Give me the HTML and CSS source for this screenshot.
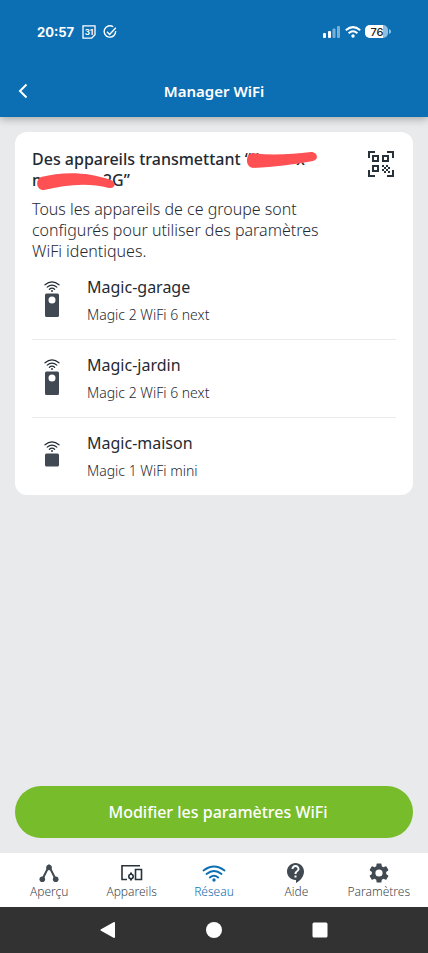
FILE: index.html
```html
<!DOCTYPE html>
<html lang="fr">
<head>
<meta charset="utf-8">
<meta name="viewport" content="width=device-width, initial-scale=1">
<title>Manager WiFi</title>
<link rel="stylesheet" href="styles.css">
</head>
<body>
<svg class="defs" aria-hidden="true">
  <symbol id="waves" viewBox="0 0 16 11">
    <g fill="none" stroke="currentColor" stroke-width="1.2" stroke-linecap="round">
      <path d="M1 3.800Q8-2.200 15 3.800M3.200 6.100Q8 2 12.800 6.100M5.400 8.300Q8 6.100 10.600 8.300"/>
    </g>
    <circle cx="8" cy="10" r=".9" fill="currentColor"/>
  </symbol>
  <symbol id="plug" viewBox="0 0 16 37">
    <use href="#waves" width="16" height="11"/>
    <path fill="#414a52" fill-rule="evenodd" d="M2.500 12.500h11a1.500 1.500 0 0 1 1.500 1.500v20.500a1.500 1.500 0 0 1-1.500 1.500h-11a1.500 1.500 0 0 1-1.500-1.500V14a1.500 1.500 0 0 1 1.500-1.500zM8 15.500a3.500 3.500 0 1 0 0 7 3.500 3.500 0 0 0 0-7z"/>
  </symbol>
  <symbol id="mini" viewBox="0 0 16 26">
    <use href="#waves" width="16" height="11"/>
    <rect x="1" y="12.500" width="14" height="13" rx="1.500" fill="#414a52"/>
  </symbol>
</svg>
<div class="screen">
  <header class="header">
    <div class="status">
      <time class="clock">20:57</time>
      <svg class="calendar" viewBox="0 0 14 14"><path fill="none" stroke="#fff" stroke-width="1.300" d="M1 .8h12v9l-3.400 3.400H1z"/><text x="7" y="10" text-anchor="middle" class="day">31</text></svg>
      <svg class="check" viewBox="0 0 14 14" fill="none" stroke="#fff" stroke-width="1.400"><path d="M10.200 1.800A5.700 5.700 0 1 0 12.600 6M4 6.800l2.600 2.600 6.200-6.600"/></svg>
      <span class="spacer"></span>
      <svg class="signal" viewBox="0 0 18 12" fill="#fff"><rect x="0" y="7" width="3" height="5" rx="1"/><rect x="5" y="5" width="3" height="7" rx="1"/><g opacity=".45"><rect x="9.500" y="2.500" width="3" height="9.500" rx="1"/><rect x="14" y="0" width="3" height="12" rx="1"/></g></svg>
      <svg class="wifi" viewBox="0 0 16 12"><g fill="none" stroke="#fff" stroke-width="2"><path d="M.8 4.200Q8-2 15.200 4.200M3.600 7.200Q8 3.400 12.400 7.200"/></g><circle cx="8" cy="10" r="1.700" fill="#fff"/></svg>
      <svg class="battery" viewBox="0 0 26 14"><rect width="23" height="13" rx="5" fill="#8fbfe0"/><path fill="#fff" d="M5 0h13v13H5a5 5 0 0 1-5-5V5a5 5 0 0 1 5-5z"/><path fill="#8fbfe0" d="M24 4c3 1 3 4 0 5z"/><text x="12" y="11" text-anchor="middle" class="level">76</text></svg>
    </div>
    <div class="titlebar">
      <button class="back" aria-label="Retour"><svg viewBox="0 0 10 16"><path d="M8.500 1.500 2 8l6.500 6.500" fill="none" stroke="#fff" stroke-width="2"/></svg></button>
      <h1>Manager WiFi</h1>
    </div>
  </header>
  <main class="main">
    <section class="card">
      <div class="intro">
        <div class="copy">
          <h2>Des appareils transmettant “<span class="hidden-name first">li<span>x</span><svg viewBox="0 0 70 16" preserveAspectRatio="none"><path fill="#ff5153" d="M5 1C25 4 45 2 64 0c7 0 8 8 2 9C46 13 26 15 6 16-2 15-2 3 5 1z"/></svg></span> <br>n<span class="hidden-name second">2<svg viewBox="0 0 78 17" preserveAspectRatio="none"><path fill="#ff5153" d="M4 4C25-1 47-2 74 7c6 3 4 9-2 8C50 9 28 12 7 17-1 17-2 7 4 4z"/></svg></span>G”</h2>
          <p>Tous les appareils de ce groupe sont configurés pour utiliser des paramètres WiFi identiques.</p>
        </div>
        <button class="qr" aria-label="Code QR"><svg viewBox="0 0 26 26"><g fill="none" stroke="#27323a" stroke-width="2"><path d="M1 7V1h6M19 1h6v6M25 19v6h-6M7 25H1v-6"/><path d="M5 5h5v5H5zM15 5h5v5h-5zM5 15h5v5H5z"/></g><path fill="#27323a" d="M14 14h2v2h-2zM18 14h2v2h-2zM16 16h2v2h-2zM20 16h2v2h-2zM14 18h2v2h-2zM18 18h2v2h-2zM16 20h2v2h-2zM20 20h2v2h-2z"/></svg></button>
      </div>
      <ul class="devices">
        <li><svg class="plug"><use href="#plug"/></svg><div><h3>Magic-garage</h3><p>Magic 2 WiFi 6 next</p></div></li>
        <li><svg class="plug"><use href="#plug"/></svg><div><h3>Magic-jardin</h3><p>Magic 2 WiFi 6 next</p></div></li>
        <li><svg class="mini"><use href="#mini"/></svg><div><h3>Magic-maison</h3><p>Magic 1 WiFi mini</p></div></li>
      </ul>
    </section>
    <button class="primary">Modifier les paramètres WiFi</button>
  </main>
  <nav class="tabs">
    <a href="#apercu"><svg viewBox="0 0 24 24"><path d="M5 19 12 5l7 14" fill="none" stroke="currentColor" stroke-width="2"/><g fill="currentColor"><circle cx="12" cy="6.500" r="2.800"/><circle cx="5.300" cy="18.300" r="2.800"/><circle cx="18.700" cy="18.300" r="2.800"/></g></svg>Aperçu</a>
    <a href="#appareils"><svg viewBox="0 0 24 24" fill="none" stroke="#27323a" stroke-width="1.600"><path d="M20 4.800H2v13.700h5M15.500 8.500h6v10h-6z"/><circle cx="11" cy="15.500" r="2.200"/><path d="M10 12.200h2M10 18.800h2"/></svg>Appareils</a>
    <a href="#reseau" class="active" aria-current="page"><svg viewBox="0 0 24 24"><g fill="none" stroke="currentColor" stroke-width="1.900" stroke-linecap="round"><path d="M1.500 9.500Q12 1.500 22.500 9.500M4.500 13Q12 6.800 19.500 13M7.800 16.500Q12 13 16.200 16.500"/></g><circle cx="12" cy="19" r="1.700" fill="currentColor"/></svg>Réseau</a>
    <a href="#aide"><svg viewBox="0 0 24 24"><path fill="currentColor" d="M11.500 2C6.810 2 3 5.810 3 10.500S6.810 19 11.500 19h.5v3c4.860-2.340 8-7 8-11.500C20 5.810 16.190 2 11.500 2zm1 14.500h-2v-2h2v2zm0-3.500h-2c0-3.250 3-3 3-5 0-1.100-.9-2-2-2s-2 .9-2 2h-2c0-2.210 1.790-4 4-4s4 1.790 4 4c0 2.500-3 2.750-3 5z"/></svg>Aide</a>
    <a href="#parametres"><svg viewBox="0 0 24 24"><path fill="currentColor" d="M19.140 12.940a7 7 0 0 0 0-1.880l2.030-1.580a.5.500 0 0 0 .12-.61l-1.920-3.320a.5.500 0 0 0-.59-.22l-2.390.96a7 7 0 0 0-1.620-.94l-.36-2.540a.5.500 0 0 0-.48-.41h-3.840a.5.500 0 0 0-.47.410l-.36 2.540a7 7 0 0 0-1.620.94l-2.390-.96a.5.500 0 0 0-.59.220L2.740 8.870a.5.500 0 0 0 .12.610l2.030 1.580a7 7 0 0 0 0 1.880l-2.030 1.580a.5.500 0 0 0-.12.610l1.920 3.320c.12.220.37.290.59.220l2.390-.96c.5.380 1.030.7 1.620.94l.36 2.540c.05.240.24.410.48.410h3.840c.24 0 .44-.17.470-.41l.36-2.540a7 7 0 0 0 1.620-.94l2.390.96c.22.080.47 0 .59-.22l1.920-3.320a.5.500 0 0 0-.12-.61zM12 15.600a3.600 3.600 0 1 1 0-7.200 3.600 3.600 0 0 1 0 7.200z"/></svg>Paramètres</a>
  </nav>
  <div class="system">
    <button aria-label="Précédent"><svg viewBox="0 0 16 16"><path fill="#fff" stroke="#fff" stroke-width="2" stroke-linejoin="round" d="M14 1v14L1.500 8z"/></svg></button>
    <button aria-label="Accueil"><svg viewBox="0 0 16 16"><circle cx="8" cy="8" r="8" fill="#fff"/></svg></button>
    <button aria-label="Récents"><svg viewBox="0 0 16 16"><rect x=".5" y=".5" width="15" height="15" rx="1.500" fill="#fff"/></svg></button>
  </div>
</div>
</body>
</html>
```
FILE: styles.css
```css
* { box-sizing: border-box; }
body { margin: 0; font-family: "Noto Sans", "Open Sans", sans-serif; color: #1f2a33; background: #e9eaec; }
h1, h2, h3, p, ul { margin: 0; padding: 0; font-weight: 500; }
button { border: 0; padding: 0; background: none; font: inherit; color: inherit; cursor: pointer; }
svg { display: block; flex: none; }
.defs { position: absolute; width: 0; height: 0; }
.screen { min-height: 100vh; display: flex; flex-direction: column; }
.header { background: #0c6eb3; color: #fff; box-shadow: 0 2px 8px rgba(0, 0, 0, .3); }
.status { height: 64px; padding: 0 37px; display: flex; align-items: center; gap: 8px; }
.clock { font: 700 13px Inter, sans-serif; }
.calendar, .check { width: 14px; height: 14px; }
.check { margin-left: -1px; }
.day { font: 700 8px Inter, sans-serif; fill: #fff; }
.spacer { flex: 1; }
.signal { width: 18px; height: 12px; margin-right: -4px; }
.wifi { width: 16px; height: 12px; margin-right: -4px; }
.battery { width: 26px; height: 14px; }
.level { font: 500 11px Inter, sans-serif; fill: #222; }
.titlebar { height: 53px; display: grid; grid-template-columns: 46px 1fr 46px; align-items: center; }
.back { height: 48px; display: flex; justify-content: center; align-items: center; }
.back svg { width: 10px; height: 16px; }
h1 { font-size: 15px; font-weight: 600; text-align: center; }
.main { flex: 1; display: flex; flex-direction: column; justify-content: space-between; padding: 15px; }
.card { background: #fff; border-radius: 12px; padding: 17px 17px 0; }
.intro { display: flex; justify-content: space-between; }
.copy { max-width: 300px; }
h2 { font-size: 16px; line-height: 21px; white-space: nowrap; }
.copy p { margin-top: 8px; font-size: 16px; line-height: 21px; font-weight: 300; }
.hidden-name { position: relative; display: inline-block; }
.hidden-name svg { position: absolute; }
.first { width: 54px; }
.first span { position: absolute; right: 0; }
.first svg { left: -4px; top: 3px; width: 70px; height: 16px; }
.second { width: 70px; text-align: right; }
.second svg { left: -5px; top: 3px; width: 78px; height: 17px; }
.qr { width: 30px; height: 30px; display: grid; place-items: center; }
.qr svg { width: 26px; height: 26px; }
.devices { list-style: none; }
.devices li { display: flex; align-items: center; gap: 27px; padding: 11px 12px 10px; border-bottom: 1px solid #e9eaec; }
.devices li:last-child { border: 0; }
.plug { width: 16px; height: 37px; margin-bottom: 4px; }
.mini { width: 16px; height: 26px; margin-bottom: 6px; }
h3 { font-size: 16px; line-height: 28px; font-weight: 400; }
.devices p { font-size: 14px; line-height: 28px; font-weight: 300; }
.primary { height: 52px; padding-left: 8px; border-radius: 26px; background: #77bc2b; color: #fff; font-size: 16px; font-weight: 500; }
.tabs { background: #fff; height: 54px; display: grid; grid-template-columns: repeat(5, 1fr); padding: 8px 8px 0; }
.tabs a { display: flex; flex-direction: column; align-items: center; color: #414a52; text-decoration: none; font-size: 12px; line-height: 14px; font-weight: 300; }
.tabs svg { width: 24px; height: 24px; }
.tabs .active { color: #0c6eb3; }
.system { height: 46px; background: #323232; display: flex; justify-content: center; gap: 90px; align-items: center; }
.system svg { width: 16px; height: 16px; }
```
